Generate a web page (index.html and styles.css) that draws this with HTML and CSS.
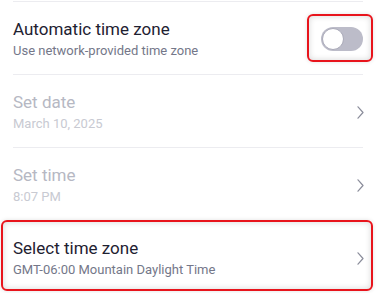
FILE: index.html
```html
<!DOCTYPE html>
<html>
<head>
<meta charset="utf-8">
<link rel="stylesheet" href="styles.css">
</head>
<body>
<div class="list">
  <div class="row">
    <div class="text">
      <div class="title">Automatic time zone</div>
      <div class="sub">Use network-provided time zone</div>
    </div>
    <div class="toggle-wrap">
      <div class="toggle"><div class="knob"></div></div>
      <div class="ring ring-toggle"></div>
    </div>
  </div>
  <div class="row disabled">
    <div class="text">
      <div class="title">Set date</div>
      <div class="sub">March 10, 2025</div>
    </div>
    <svg class="chev" width="7" height="13" viewBox="0 0 7 13"><path d="M1 0.8 L6 6.5 L1 12.2" fill="none" stroke="currentColor" stroke-width="1.2" stroke-linecap="round" stroke-linejoin="round"/></svg>
  </div>
  <div class="row disabled">
    <div class="text">
      <div class="title">Set time</div>
      <div class="sub">8:07 PM</div>
    </div>
    <svg class="chev" width="7" height="13" viewBox="0 0 7 13"><path d="M1 0.8 L6 6.5 L1 12.2" fill="none" stroke="currentColor" stroke-width="1.2" stroke-linecap="round" stroke-linejoin="round"/></svg>
  </div>
  <div class="row">
    <div class="text">
      <div class="title">Select time zone</div>
      <div class="sub">GMT-06:00 Mountain Daylight Time</div>
    </div>
    <svg class="chev" width="7" height="13" viewBox="0 0 7 13"><path d="M1 0.8 L6 6.5 L1 12.2" fill="none" stroke="currentColor" stroke-width="1.2" stroke-linecap="round" stroke-linejoin="round"/></svg>
    <div class="ring ring-row"></div>
  </div>
</div>
</body>
</html>
```

FILE: styles.css
```css
html, body {
  margin: 0;
  padding: 0;
  background: #ffffff;
}
body {
  font-family: Roboto, "Liberation Sans", sans-serif;
  overflow: hidden;
}
.list {
  padding: 1px 15px 0 13px;
}
.row {
  position: relative;
  display: flex;
  align-items: center;
  justify-content: space-between;
  border-top: 1px solid #ececf0;
  padding: 16px 0 14px 0;
}
.text {
  display: flex;
  flex-direction: column;
  gap: 2px;
}
.title {
  font-size: 17px;
  line-height: 22px;
  color: #1e2131;
}
.sub {
  font-size: 13px;
  line-height: 18px;
  color: #747789;
}
.disabled .title {
  color: #b6b8c3;
}
.disabled .sub {
  color: #c8cad2;
}
.chev {
  color: #8b8d9b;
  display: block;
  margin-right: -1px;
}
.toggle-wrap {
  position: relative;
}
.toggle {
  width: 42px;
  height: 24px;
  border-radius: 12px;
  background: #bcbcc9;
  box-sizing: border-box;
  padding: 1px;
}
.knob {
  width: 22px;
  height: 22px;
  border-radius: 50%;
  background: #ffffff;
  box-sizing: border-box;
  border: 1px solid #a9a9b8;
}
.ring {
  position: absolute;
  box-sizing: border-box;
  border: 2px solid #e8141c;
  border-radius: 6px;
  box-shadow: inset 0 0 6px rgba(0, 0, 0, 0.16), 0 0 4px rgba(0, 0, 0, 0.12);
  pointer-events: none;
}
.ring-toggle {
  left: -14px;
  right: -10px;
  top: -13px;
  bottom: -11px;
}
.ring-row {
  left: -12px;
  right: -10px;
  top: -1px;
  bottom: 2px;
}
```
